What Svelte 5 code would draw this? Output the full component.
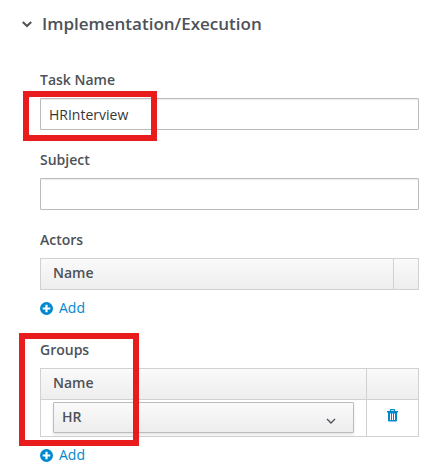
<script>
  let open = $state(true);
  let taskName = $state('HRInterview');
  let subject = $state('');
  let group = $state('HR');
</script>

{#snippet addLink()}
  <a class="add" href="#add">
    <svg width="13" height="13" viewBox="0 0 13 13" aria-hidden="true">
      <circle cx="6.5" cy="6.5" r="6.5" fill="#0088ce" />
      <path d="M6.5 2.7v7.6M2.7 6.5h7.6" stroke="#fff" stroke-width="2.2" />
    </svg>
    <span>Add</span>
  </a>
{/snippet}

<main>
  <h2>
    <button class="toggle" aria-expanded={open} onclick={() => (open = !open)}>
      <svg width="10" height="10" viewBox="0 0 10 10" aria-hidden="true">
        <path d="M.8 3l4.2 4 4.2-4" fill="none" stroke="#4d5258" stroke-width="2" />
      </svg>
      <span>Implementation/Execution</span>
    </button>
  </h2>

  {#if open}
    <form>
      <div class="field">
        <label for="task-name">Task Name</label>
        <input id="task-name" type="text" bind:value={taskName} />
        <div class="mark mark-task"></div>
      </div>

      <div class="field">
        <label for="subject">Subject</label>
        <input id="subject" type="text" bind:value={subject} />
      </div>

      <div class="field">
        <span class="label" id="actors">Actors</span>
        <table aria-labelledby="actors">
          <thead>
            <tr><th>Name</th><th class="narrow" aria-label="Actions"></th></tr>
          </thead>
        </table>
        {@render addLink()}
      </div>

      <div class="field">
        <span class="label" id="groups">Groups</span>
        <table aria-labelledby="groups">
          <thead>
            <tr><th>Name</th><th class="wide" aria-label="Actions"></th></tr>
          </thead>
          <tbody>
            <tr>
              <td>
                <div class="picker">
                  <select aria-label="Group name" bind:value={group}>
                    <option>HR</option>
                  </select>
                  <svg width="10" height="8" viewBox="0 0 10 8" aria-hidden="true">
                    <path d="M1 2l4 4 4-4" fill="none" stroke="#4d5258" stroke-width="1.3" />
                  </svg>
                </div>
              </td>
              <td class="action">
                <button class="trash" type="button" aria-label="Delete">
                  <svg width="11" height="13" viewBox="0 0 11 13" aria-hidden="true">
                    <path d="M3.5 2.5v-1.4q0-.4.4-.4h3.2q.4 0 .4.4v1.4" fill="none" stroke="#0088ce" stroke-width="1.2" />
                    <path d="M0 2h11v1.4H10v8.2q0 1-1 1H2q-1 0-1-1V3.4H0z" fill="#0088ce" />
                    <path d="M3.5 4.5v6.5M5.5 4.5v6.5M7.5 4.5v6.5" stroke="#fff" />
                  </svg>
                </button>
              </td>
            </tr>
          </tbody>
        </table>
        {@render addLink()}
        <div class="mark mark-groups"></div>
      </div>
    </form>
  {/if}
</main>

<style>
  :global(body) {
    background: #fff;
  }
  main {
    padding: 12px 5px 0 22px;
    font: 14px/20px 'Open Sans', sans-serif;
    color: #363636;
  }
  h2 {
    margin: 0;
  }
  button {
    border: 0;
    padding: 0;
    background: none;
    cursor: pointer;
  }
  .toggle {
    display: flex;
    align-items: center;
    gap: 10px;
    font: 600 17px/24px 'Open Sans', sans-serif;
    color: #4d5258;
  }
  form {
    display: flex;
    flex-direction: column;
    gap: 20px;
    padding: 34px 0 0 18px;
  }
  .field {
    position: relative;
  }
  label,
  .label {
    display: block;
    margin-bottom: 8px;
    font-weight: 600;
    color: #4d5258;
  }
  input {
    display: block;
    box-sizing: border-box;
    width: 100%;
    height: 32px;
    padding: 0 8px;
    border: 1px solid #bbb;
    border-radius: 1px;
    box-shadow: inset 0 1px 1px rgba(3, 3, 3, 0.075);
    font: inherit;
    color: inherit;
    background: #fff;
  }
  table {
    width: 100%;
    border-collapse: collapse;
  }
  thead {
    background: linear-gradient(#fafafa, #ededed);
  }
  th,
  td {
    border: 1px solid #d1d1d1;
  }
  th {
    height: 28px;
    padding: 0 12px 2px;
    text-align: left;
    font-weight: 600;
    color: #4d5258;
  }
  .narrow,
  .wide {
    padding: 0;
    width: 24px;
  }
  .wide {
    width: 51px;
  }
  td {
    padding: 2px 12px 3px;
  }
  .action {
    padding: 0;
    text-align: center;
  }
  .picker {
    display: grid;
    align-items: center;
  }
  .picker > * {
    grid-area: 1 / 1;
  }
  .picker svg {
    justify-self: end;
    margin: 6px 18px 0 0;
    pointer-events: none;
  }
  select {
    appearance: none;
    width: 100%;
    height: 31px;
    padding: 0 8px 2px;
    border: 1px solid #bbb;
    border-radius: 1px;
    background: linear-gradient(#fafafa, #ededed);
    box-shadow: 0 2px 3px rgba(3, 3, 3, 0.1);
    font: 600 14px/20px 'Open Sans', sans-serif;
    color: #4d5258;
  }
  .trash {
    display: block;
    margin: 0 auto;
    padding-bottom: 6px;
  }
  .trash svg {
    display: block;
  }
  .add {
    display: flex;
    align-items: center;
    gap: 6px;
    width: max-content;
    padding: 8px 0 2px;
    color: #0088ce;
    text-decoration: none;
  }
  .mark {
    position: absolute;
    box-sizing: border-box;
    border: 6px solid #e81c1c;
    pointer-events: none;
  }
  .mark-task {
    top: 21px;
    left: -17px;
    width: 134px;
    height: 50px;
  }
  .mark-groups {
    top: -7px;
    left: -21px;
    width: 120px;
    height: 113px;
  }
</style>
